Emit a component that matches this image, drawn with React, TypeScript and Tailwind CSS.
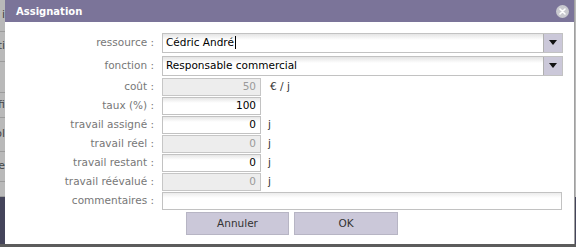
import React from "react";

const font = { fontFamily: '"DejaVu Sans", Verdana, sans-serif' };

function Label({ children }: { children: React.ReactNode }) {
  return (
    <div className="w-[150px] shrink-0 text-right pr-[1px] text-[10.5px] text-[#777] leading-none whitespace-nowrap">
      {children}
    </div>
  );
}

function NumInput({ value, disabled }: { value: string; disabled?: boolean }) {
  return (
    <div
      className={
        disabled
          ? "w-[99px] h-[18px] border border-[#c6c6c6] bg-[#ededed] text-[#9a9a9a] text-[10.5px] flex items-center justify-end pr-[4px]"
          : "w-[99px] h-[18px] border border-[#c2c2c2] bg-[linear-gradient(#e6e6e6,#ffffff_5px)] text-black text-[10.5px] flex items-center justify-end pr-[4px]"
      }
    >
      {value}
    </div>
  );
}

function Row({ label, children, h = "h-[19px]" }: { label: string; children: React.ReactNode; h?: string }) {
  return (
    <div className={`flex items-center gap-[7px] ${h}`}>
      <Label>{label}</Label>
      {children}
    </div>
  );
}

function Select({ value, cursor }: { value: string; cursor?: boolean }) {
  return (
    <div className="w-[401px] h-[20px] flex border border-[#c2c2c2]">
      <div className="flex-1 bg-[linear-gradient(#e4e4e4,#ffffff_6px)] text-black text-[10.5px] flex items-center pl-[3px]">
        {value}
        {cursor && <span className="inline-block w-px h-[13px] bg-black ml-px" />}
      </div>
      <div className="w-[19px] bg-[#cbc8d9] border-l border-[#b0b0b0] flex items-center justify-center">
        <svg width="8" height="5" viewBox="0 0 8 5">
          <path d="M0 0H8L4 5Z" fill="#111" />
        </svg>
      </div>
    </div>
  );
}

export default function App() {
  const bgRows = [
    { h: 32, t: "i" },
    { h: 30, t: "ti" },
    { h: 31, t: "" },
    { h: 25, t: "fi" },
    { h: 34, t: "ol" },
    { h: 30, t: "e" },
    { h: 15, t: "" },
  ];
  return (
    <div className="relative w-[576px] h-[247px] overflow-hidden bg-[#b9b9b9]" style={font}>
      {/* background page */}
      <div className="flex flex-col w-full">
        {bgRows.map((r, i) => (
          <div
            key={i}
            className="flex items-center justify-end w-[5px] overflow-hidden border-b border-[#9c9c9c] text-[11px] text-[#444] whitespace-nowrap"
            style={{ height: r.h }}
          >
            {r.t}
          </div>
        ))}
        <div className="h-[60px] w-full bg-[#44445a]" />
      </div>
      <div className="absolute left-0 bottom-0 w-full h-[3px] bg-[#5c5c5c]" />

      {/* dialog */}
      <div className="absolute left-[5px] top-0 w-[570px] h-[244px] bg-white border-r border-[#a0a0a0] flex flex-col">
        <div className="h-[22px] bg-[#7b7499] flex items-center justify-between pl-[11px] pr-[5px] shrink-0">
          <span className="text-white font-bold text-[10px]">Assignation</span>
          <div className="w-[13px] h-[13px] rounded-full bg-[#c9c9cf] flex items-center justify-center">
            <svg width="7" height="7" viewBox="0 0 7 7">
              <path d="M1 1L6 6M6 1L1 6" stroke="#fff" strokeWidth="1.6" strokeLinecap="round" />
            </svg>
          </div>
        </div>

        <div className="flex flex-col pt-[10px]">
          <Row label="ressource :" h="h-[21px]">
            <Select value="Cédric André" cursor />
          </Row>
          <div className="h-[2px]" />
          <Row label="fonction :" h="h-[21px]">
            <Select value="Responsable commercial" />
          </Row>
          <div className="h-[1px]" />
          <Row label="coût :">
            <NumInput value="50" disabled />
            <span className="text-[10.5px] text-[#333] ml-[2px]">€ / j</span>
          </Row>
          <Row label="taux (%) :">
            <NumInput value="100" />
          </Row>
          <Row label="travail assigné :">
            <NumInput value="0" />
            <span className="text-[10.5px] text-[#333]">j</span>
          </Row>
          <Row label="travail réel :">
            <NumInput value="0" disabled />
            <span className="text-[10.5px] text-[#333]">j</span>
          </Row>
          <Row label="travail restant :">
            <NumInput value="0" />
            <span className="text-[10.5px] text-[#333]">j</span>
          </Row>
          <Row label="travail réévalué :">
            <NumInput value="0" disabled />
            <span className="text-[10.5px] text-[#333]">j</span>
          </Row>
          <Row label="commentaires :">
            <div className="w-[400px] h-[18px] border border-[#c2c2c2] bg-[linear-gradient(#ececec,#ffffff_5px)]" />
          </Row>
          <div className="flex gap-[5px] pl-[181px] pt-[2px]">
            <button className="w-[103px] h-[23px] bg-[#cbc8d9] border border-[#b7b5c4] text-[10.5px] text-[#333]">
              Annuler
            </button>
            <button className="w-[104px] h-[23px] bg-[#cbc8d9] border border-[#b7b5c4] text-[10.5px] text-[#333]">
              OK
            </button>
          </div>
        </div>
      </div>
    </div>
  );
}
